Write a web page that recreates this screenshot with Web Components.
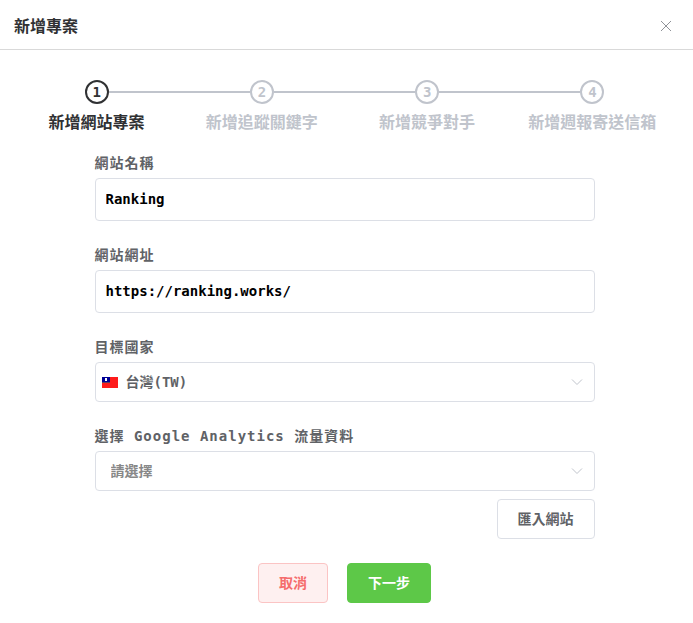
<!DOCTYPE html>
<html lang="zh-Hant">
<head>
<meta charset="utf-8">
<meta name="viewport" content="width=device-width, initial-scale=1">
<title>新增專案</title>
<style>
  body {
    margin: 0;
    background: #fff;
    color: #303133;
    font-family: "DejaVu Sans Mono", "Noto Sans CJK TC", monospace;
    font-weight: 700;
    --border: #dcdfe6;
    --muted: #c0c4cc;
    --regular: #606266;
  }
</style>
</head>
<body>
<project-dialog heading="新增專案">
  <step-list>
    <step-item number="1" active>新增網站專案</step-item>
    <step-item number="2">新增追蹤關鍵字</step-item>
    <step-item number="3">新增競爭對手</step-item>
    <step-item number="4">新增週報寄送信箱</step-item>
  </step-list>

  <project-form>
    <text-field value="Ranking">網站名稱</text-field>
    <text-field type="url" value="https://ranking.works/">網站網址</text-field>
    <select-field value="台灣(TW)" flag>目標國家</select-field>
    <select-field value="請選擇" empty>選擇 Google Analytics 流量資料</select-field>
    <action-button slot="extra">匯入網站</action-button>
  </project-form>

  <action-button slot="footer" kind="danger">取消</action-button>
  <action-button slot="footer" kind="success">下一步</action-button>
</project-dialog>

<script>
class ProjectDialog extends HTMLElement {
  constructor() {
    super();
    this.attachShadow({ mode: "open" });
    this.shadowRoot.innerHTML = `
      <style>
        :host {
          display: block;
        }

        header {
          display: flex;
          align-items: center;
          justify-content: space-between;
          height: 46px;
          padding: 3px 20px 0 14px;
          border-bottom: 1px solid #d9d9d9;
        }

        h1 {
          margin: 0;
          padding-top: 2px;
          font-size: 16px;
          line-height: 24px;
        }

        button {
          display: flex;
          padding: 0;
          border: 0;
          background: none;
          cursor: pointer;
        }

        main {
          padding: 30px 18px 20px 14px;
        }

        footer {
          display: flex;
          justify-content: center;
          gap: 19px;
          margin-top: 24px;
        }
      </style>

      <header>
        <h1></h1>
        <button type="button" aria-label="關閉">
          <svg width="14" height="14" viewBox="0 0 14 14" fill="none" stroke="#909399">
            <path d="M2 2l10 10M12 2L2 12"/>
          </svg>
        </button>
      </header>
      <main>
        <slot></slot>
        <footer><slot name="footer"></slot></footer>
      </main>
    `;
    this.shadowRoot.querySelector("h1").textContent = this.getAttribute("heading");
  }
}

class StepList extends HTMLElement {
  constructor() {
    super();
    this.attachShadow({ mode: "open" });
    this.shadowRoot.innerHTML = `
      <style>
        :host {
          display: flex;
        }

        ::slotted(*) {
          flex: 1 1 0;
          min-width: 0;
        }
      </style>
      <slot></slot>
    `;
  }
}

class StepItem extends HTMLElement {
  constructor() {
    super();
    this.attachShadow({ mode: "open" });
    this.shadowRoot.innerHTML = `
      <style>
        :host {
          display: block;
          color: var(--muted);
          text-align: center;
        }

        :host([active]) {
          color: #303133;
        }

        .head {
          display: flex;
          align-items: center;
        }

        /* half a connector on each side of the circle */
        .head::before,
        .head::after {
          content: "";
          flex: 1;
          height: 2px;
          background: var(--muted);
        }

        :host(:first-child) .head::before,
        :host(:last-child) .head::after {
          background: none;
        }

        .circle {
          box-sizing: border-box;
          width: 24px;
          height: 24px;
          border: 2px solid;
          border-radius: 50%;
          font-size: 14px;
          line-height: 20px;
        }

        .title {
          font-size: 16px;
          line-height: 38px;
          white-space: nowrap;
        }
      </style>
      <div class="head"><div class="circle"></div></div>
      <div class="title"><slot></slot></div>
    `;
    this.shadowRoot.querySelector(".circle").textContent = this.getAttribute("number");
  }
}

class ProjectForm extends HTMLElement {
  constructor() {
    super();
    this.attachShadow({ mode: "open" });
    this.shadowRoot.innerHTML = `
      <style>
        :host {
          display: block;
          max-width: 500px;
          margin: 6px auto 0;
        }

        form {
          display: flex;
          flex-direction: column;
          gap: 19px;
        }

        .extra {
          display: flex;
          justify-content: flex-end;
          margin-top: 8px;
        }
      </style>
      <form><slot></slot></form>
      <div class="extra"><slot name="extra"></slot></div>
    `;
  }
}

const fieldStyle = `
  :host {
    display: block;
  }

  label {
    display: block;
    color: var(--regular);
    font-size: 14px;
    line-height: 30px;
    letter-spacing: 1px;
  }

  input,
  select {
    display: block;
    box-sizing: border-box;
    width: 100%;
    margin: 0;
    border: 1px solid var(--border);
    border-radius: 4px;
    background: #fff;
    font: inherit;
    font-size: 14px;
    outline: none;
  }
`;

class TextField extends HTMLElement {
  constructor() {
    super();
    this.attachShadow({ mode: "open" });
    this.shadowRoot.innerHTML = `
      <style>
        ${fieldStyle}

        input {
          height: 43px;
          padding: 0 10px 2px;
          color: #000;
        }
      </style>
      <label for="control"><slot></slot></label>
      <input id="control">
    `;
    const input = this.shadowRoot.querySelector("input");
    input.type = this.getAttribute("type") || "text";
    input.value = this.getAttribute("value");
  }
}

class SelectField extends HTMLElement {
  constructor() {
    super();
    this.attachShadow({ mode: "open" });
    this.shadowRoot.innerHTML = `
      <style>
        ${fieldStyle}

        .box {
          position: relative;
        }

        select {
          height: 40px;
          padding: 0 30px 0 15px;
          appearance: none;
          color: var(--regular);
        }

        :host([flag]) select {
          padding-left: 30px;
        }

        :host([empty]) select {
          color: #888;
        }

        svg {
          position: absolute;
          top: 0;
          bottom: 0;
          margin: auto;
          pointer-events: none;
        }

        .flag {
          display: none;
          left: 7px;
        }

        :host([flag]) .flag {
          display: block;
        }

        .arrow {
          right: 12px;
        }
      </style>
      <label for="control"><slot></slot></label>
      <div class="box">
        <select id="control"><option></option></select>
        <svg class="flag" width="16" height="11" viewBox="0 0 16 11">
          <path fill="#fe1b1b" d="M0 0h16v11H0z"/>
          <path fill="#000095" d="M0 0h8v5H0z"/>
          <path fill="#5c3f63" d="M0 5h8v1H0z"/>
          <path fill="#fff" d="M3 1h2v3H3z"/>
        </svg>
        <svg class="arrow" width="12" height="8" viewBox="0 0 12 8" fill="none" stroke="#c0c4cc">
          <path d="M1 1.5l5 5 5-5"/>
        </svg>
      </div>
    `;
    this.shadowRoot.querySelector("option").textContent = this.getAttribute("value");
  }
}

class ActionButton extends HTMLElement {
  constructor() {
    super();
    this.attachShadow({ mode: "open" });
    this.shadowRoot.innerHTML = `
      <style>
        :host {
          display: block;
        }

        button {
          display: block;
          height: 40px;
          padding: 0 20px 2px;
          border: 1px solid var(--border);
          border-radius: 4px;
          background: #fff;
          color: var(--regular);
          font: inherit;
          font-size: 14px;
          cursor: pointer;
        }

        :host([kind="danger"]) button {
          border-color: #fbc4c4;
          background: #fef0f0;
          color: #f56c6c;
        }

        :host([kind="success"]) button {
          border-color: #5dc848;
          background: #5dc848;
          color: #fff;
        }
      </style>
      <button type="button"><slot></slot></button>
    `;
  }
}

customElements.define("project-dialog", ProjectDialog);
customElements.define("step-list", StepList);
customElements.define("step-item", StepItem);
customElements.define("project-form", ProjectForm);
customElements.define("text-field", TextField);
customElements.define("select-field", SelectField);
customElements.define("action-button", ActionButton);
</script>
</body>
</html>
